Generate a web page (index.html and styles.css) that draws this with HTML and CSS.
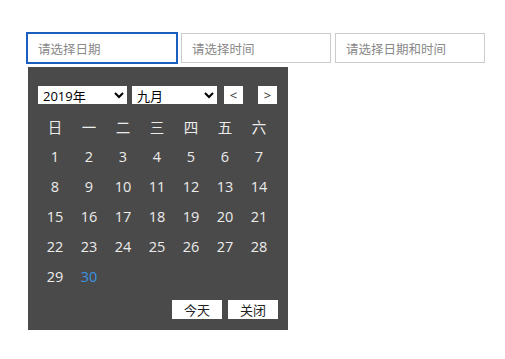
FILE: index.html
```html
<!DOCTYPE html>
<html lang="zh-CN">
<head>
    <meta charset="UTF-8">
    <meta name="viewport" content="width=device-width, initial-scale=1.0">
    <title>日期选择</title>
    <link rel="stylesheet" href="styles.css">
</head>
<body>
    <main class="page">
        <div class="inputs">
            <input type="text" class="field field-focus" placeholder="请选择日期">
            <input type="text" class="field" placeholder="请选择时间">
            <input type="text" class="field" placeholder="请选择日期和时间">
        </div>
        <div class="calendar">
            <div class="cal-head">
                <select class="sel sel-year">
                    <option>2019年</option>
                </select>
                <select class="sel sel-month">
                    <option>九月</option>
                </select>
                <button type="button" class="nav">&lt;</button>
                <button type="button" class="nav">&gt;</button>
            </div>
            <div class="days">
                <span>日</span><span>一</span><span>二</span><span>三</span><span>四</span><span>五</span><span>六</span>
                <span>1</span><span>2</span><span>3</span><span>4</span><span>5</span><span>6</span><span>7</span>
                <span>8</span><span>9</span><span>10</span><span>11</span><span>12</span><span>13</span><span>14</span>
                <span>15</span><span>16</span><span>17</span><span>18</span><span>19</span><span>20</span><span>21</span>
                <span>22</span><span>23</span><span>24</span><span>25</span><span>26</span><span>27</span><span>28</span>
                <span>29</span><span class="today">30</span>
            </div>
            <div class="cal-foot">
                <button type="button" class="act">今天</button>
                <button type="button" class="act">关闭</button>
            </div>
        </div>
    </main>
</body>
</html>
```

FILE: styles.css
```css
body {
    margin: 0;
    background-color: #fff;
    font-family: 'Open Sans', 'Noto Sans CJK SC', sans-serif;
    color: #333;
}
.page {
    padding: 33px 0 0 27px;
}
.inputs {
    display: flex;
    gap: 4px;
}
.field {
    box-sizing: border-box;
    width: 150px;
    height: 30px;
    margin: 0;
    padding: 0 10px;
    border: 1px solid #ccc;
    font-family: 'Noto Sans CJK SC', sans-serif;
    font-size: 12.5px;
    color: #333;
    outline: none;
}
.field::placeholder {
    color: #888;
}
.field-focus {
    border-color: #1a5fc0;
    box-shadow: 0 0 0 1px #1a5fc0;
}
.calendar {
    box-sizing: border-box;
    width: 260px;
    height: 263px;
    margin: 4px 0 0 1px;
    padding: 19px 10px 0 10px;
    background-color: #4a4a4a;
}
.cal-head {
    display: flex;
    align-items: center;
    height: 18px;
}
.sel {
    box-sizing: border-box;
    height: 18px;
    margin: 0;
    padding: 0 0 0 1px;
    border: none;
    background-color: #fff;
    color: #000;
    font-family: 'Open Sans', 'Noto Sans CJK SC', sans-serif;
    font-size: 13px;
    line-height: 18px;
}
.sel-year {
    width: 89px;
}
.sel-month {
    width: 85px;
    margin-left: 5px;
}
.nav {
    box-sizing: border-box;
    width: 19px;
    height: 18px;
    padding: 0;
    border: none;
    background-color: #fff;
    color: #333;
    font-family: 'Open Sans', sans-serif;
    font-size: 13px;
    line-height: 18px;
    margin-left: 7px;
}
.nav + .nav {
    margin-left: 15px;
}
.days {
    display: grid;
    grid-template-columns: repeat(7, 34px);
    grid-auto-rows: 30px;
    margin-top: 7px;
    color: #ececec;
    font-size: 14.5px;
}
.days span {
    display: flex;
    align-items: center;
    justify-content: center;
}
.days .today {
    color: #3a92e0;
}
.cal-foot {
    display: flex;
    justify-content: flex-end;
    gap: 6px;
    margin-top: 9px;
}
.act {
    width: 50px;
    height: 19px;
    padding: 0;
    border: none;
    background-color: #fff;
    color: #222;
    font-family: 'Noto Sans CJK SC', sans-serif;
    font-size: 13px;
    line-height: 19px;
}
```
